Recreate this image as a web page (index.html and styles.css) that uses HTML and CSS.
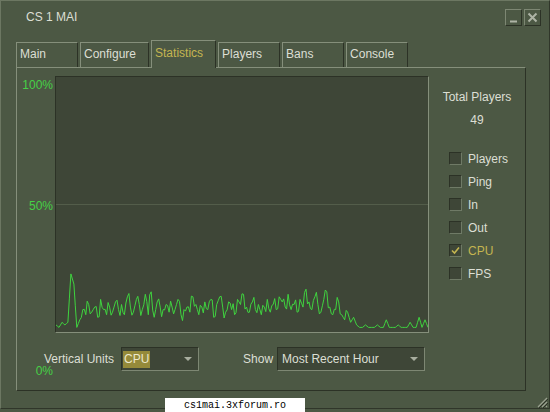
FILE: index.html
```html
<!DOCTYPE html>
<html lang="en">

<head>
    <meta charset="UTF-8">
    <meta name="viewport" content="width=device-width, initial-scale=1.0">
    <title>CS 1 MAI</title>
    <link rel="stylesheet" href="styles.css">
</head>

<body>
    <div class="window">
        <div class="titlebar">
            <span class="title">CS 1 MAI</span>
            <div class="title-buttons">
                <button class="win-btn" title="Minimize">
                    <svg width="15" height="15" viewBox="0 0 15 15"><path d="M4 11.5 H11" stroke="#aeb4a6" stroke-width="2"/></svg>
                </button>
                <button class="win-btn" title="Close">
                    <svg width="15" height="15" viewBox="0 0 15 15"><path d="M3.5 3.5 L11.5 11.5 M11.5 3.5 L3.5 11.5" stroke="#aeb4a6" stroke-width="2"/></svg>
                </button>
            </div>
        </div>

        <div class="tabs">
            <div class="tab">Main</div>
            <div class="tab">Configure</div>
            <div class="tab active">Statistics</div>
            <div class="tab">Players</div>
            <div class="tab">Bans</div>
            <div class="tab">Console</div>
        </div>

        <div class="panel">
            <div class="axis">
                <span class="top">100%</span>
                <span class="mid">50%</span>
                <span class="zero">0%</span>
            </div>

            <div class="chart">
                <svg viewBox="0 0 372 255" width="372" height="255">
                    <line class="gridline" x1="0" y1="127.5" x2="372" y2="127.5" />
                    <polyline id="cpuLine" class="plot" points="" />
                </svg>
            </div>

            <div class="sidebar">
                <div class="total-label">Total Players</div>
                <div class="total-value">49</div>
                <ul class="series">
                    <li><span class="check"></span>Players</li>
                    <li><span class="check"></span>Ping</li>
                    <li><span class="check"></span>In</li>
                    <li><span class="check"></span>Out</li>
                    <li class="on">
                        <span class="check"><svg width="11" height="11" viewBox="0 0 11 11"><path d="M2 5.5 L4.5 8 L9 2.5" fill="none" stroke="#c4b550" stroke-width="1.6"/></svg></span>CPU
                    </li>
                    <li><span class="check"></span>FPS</li>
                </ul>
            </div>

            <div class="controls">
                <span class="ctl-label">Vertical Units</span>
                <div class="select units">
                    <span class="value picked">CPU</span>
                    <span class="arrow"></span>
                </div>
                <span class="ctl-label show">Show</span>
                <div class="select range">
                    <span class="value">Most Recent Hour</span>
                    <span class="arrow"></span>
                </div>
            </div>
        </div>

        <div class="footer">
            <svg class="grip" width="12" height="12" viewBox="0 0 12 12">
                <path d="M11 2 L2 11 M11 6 L6 11 M11 10 L10 11" stroke="#9aa190" stroke-width="1.2" />
                <path d="M12 3 L3 12 M12 7 L7 12" stroke="#2c3226" stroke-width="1" />
            </svg>
        </div>
    </div>

    <div class="watermark">cs1mai.3xforum.ro</div>

    <script>
        // cpu load samples for the last hour, in percent
        const cpu = [
            2, 1, 3, 2, 3, 22, 18, 1, 4, 8, 6, 10, 7, 9, 5, 12, 8, 6, 9, 7,
            11, 8, 10, 6, 13, 9, 7, 12, 10, 8, 14, 6, 15, 5, 11, 9, 8, 10, 7, 9,
            8, 12, 6, 8, 9, 7, 13, 10, 6, 9, 11, 8, 12, 5, 10, 13, 9, 7, 11, 8,
            6, 12, 10, 14, 9, 7, 11, 8, 10, 6, 9, 12, 7, 10, 8, 13, 11, 9, 14, 8,
            10, 7, 12, 9, 16, 11, 8, 13, 10, 7, 12, 15, 9, 6, 8, 11, 6, 4, 7, 3,
            5, 2, 1, 1, 2, 1, 1, 1, 2, 1, 1, 4, 1, 1, 1, 2, 1, 1, 1, 3,
            1, 1, 5, 1, 4, 1
        ];

        // fill in the gaps between samples so the trace looks as busy as the live one
        const samples = [];
        cpu.forEach((v, i) => {
            samples.push(v);
            if (i < cpu.length - 1) {
                const next = cpu[i + 1];
                const busy = v > 3 && next > 3;
                const jitter = busy ? ((i * 37) % 7 - 3) * 1.1 : 0;
                samples.push(Math.max(0.5, (v + next) / 2 + jitter));
            }
        });

        const w = 372, h = 255;
        const step = w / (samples.length - 1);
        const points = samples.map((v, i) => `${(i * step).toFixed(1)},${(h - 2 - v / 100 * h).toFixed(1)}`);
        document.getElementById('cpuLine').setAttribute('points', points.join(' '));
    </script>
</body>

</html>
```

FILE: styles.css
```css
html,
body {
    margin: 0;
    height: 100%;
    background: #4c5844;
}

body {
    position: relative;
    font-family: "Liberation Sans", Arial, sans-serif;
    font-size: 12px;
    color: #dcdfd4;
}

.window {
    width: 550px;
    height: 409px;
    box-sizing: border-box;
    background: #4c5844;
    border: 1px solid;
    border-color: #6c7762 #30362a #30362a #6c7762;
    display: flex;
    flex-direction: column;
}

/* title bar */
.titlebar {
    height: 32px;
    display: flex;
    align-items: center;
    justify-content: space-between;
    padding: 0 8px 0 25px;
}

.title {
    line-height: 14px;
}

.title-buttons {
    display: flex;
    gap: 2px;
}

.win-btn {
    width: 17px;
    height: 17px;
    padding: 0;
    background: #4c5844;
    border: 1px solid;
    border-color: #7d8773 #2c3226 #2c3226 #7d8773;
    display: flex;
    align-items: center;
    justify-content: center;
}

/* tabs */
.tabs {
    height: 34px;
    margin-left: 15px;
    display: flex;
    align-items: flex-end;
    gap: 2px;
}

.tab {
    min-width: 62px;
    height: 25px;
    box-sizing: border-box;
    padding: 0 12px 0 3px;
    line-height: 23px;
    border: 1px solid;
    border-bottom: none;
    border-color: #858f7b #2c3226 transparent #858f7b;
}

.tab.active {
    height: 28px;
    margin-bottom: -1px;
    padding-top: 1px;
    color: #c4b550;
    background: #4c5844;
    position: relative;
    z-index: 1;
}

/* statistics panel */
.panel {
    height: 324px;
    width: 510px;
    margin-left: 15px;
    box-sizing: border-box;
    padding-top: 8px;
    border: 1px solid;
    border-color: #858f7b #2c3226 #2c3226 #858f7b;
    display: grid;
    grid-template-columns: 38px 374px 1fr;
    grid-template-rows: 257px 24px;
    row-gap: 14px;
}

.axis {
    grid-column: 1;
    grid-row: 1 / 3;
    display: flex;
    flex-direction: column;
    align-items: flex-end;
    padding-right: 2px;
    color: #46d046;
    line-height: 14px;
}

.axis .top {
    margin-top: 2px;
}

.axis .mid {
    margin-top: 107px;
}

.axis .zero {
    margin-top: 151px;
}

.chart {
    grid-column: 2;
    grid-row: 1;
    background: #3e4637;
    border: 1px solid;
    border-color: #2c3226 #858f7b #858f7b #2c3226;
}

.chart svg {
    display: block;
}

.gridline {
    stroke: #535d4a;
    stroke-width: 1;
}

.plot {
    fill: none;
    stroke: #3fd43f;
    stroke-width: 1;
}

/* right column */
.sidebar {
    grid-column: 3;
    grid-row: 1;
    line-height: 14px;
}

.total-label {
    margin-top: 14px;
    text-align: center;
}

.total-value {
    margin-top: 9px;
    text-align: center;
}

.series {
    list-style: none;
    margin: 20px 0 0;
    padding: 0 0 0 20px;
}

.series li {
    height: 23px;
    display: flex;
    align-items: center;
}

.series li.on {
    color: #c4b550;
}

.check {
    width: 13px;
    height: 13px;
    box-sizing: border-box;
    margin-right: 6px;
    background: #3e4637;
    border: 1px solid;
    border-color: #2c3226 #6f7a66 #6f7a66 #2c3226;
    display: flex;
}

/* bottom controls */
.controls {
    grid-column: 1 / 4;
    grid-row: 2;
    display: flex;
    align-items: center;
    padding-left: 27px;
}

.ctl-label {
    margin-right: 7px;
}

.ctl-label.show {
    margin-left: 44px;
    margin-right: 4px;
}

.select {
    height: 24px;
    box-sizing: border-box;
    background: #3e4637;
    border: 1px solid;
    border-color: #2c3226 #7d8773 #7d8773 #2c3226;
    display: flex;
    align-items: center;
    justify-content: space-between;
    padding: 0 6px 0 1px;
}

.select.units {
    width: 78px;
}

.select.range {
    width: 148px;
    padding-left: 3px;
}

.value {
    line-height: 17px;
    padding: 0 1px;
}

.value.picked {
    background: #958a3a;
    color: #ece8cc;
}

.arrow {
    width: 0;
    height: 0;
    border-left: 4px solid transparent;
    border-right: 4px solid transparent;
    border-top: 4px solid #a8ae9f;
}

.footer {
    flex: 1;
    display: flex;
    justify-content: flex-end;
    align-items: flex-end;
    padding-right: 1px;
}

.grip {
    display: block;
}

.watermark {
    position: absolute;
    left: 165px;
    top: 398px;
    width: 140px;
    height: 14px;
    background: #fff;
    color: #000;
    font-family: "Liberation Mono", "Courier New", monospace;
    font-size: 10px;
    line-height: 15px;
    text-align: center;
}
```
